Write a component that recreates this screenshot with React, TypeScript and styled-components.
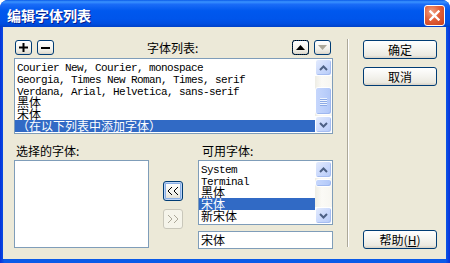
import React from "react";
import styled, { createGlobalStyle } from "styled-components";

const GlobalStyle = createGlobalStyle`
    html, body {
        margin: 0;
        padding: 0;
        background: #ffffff;
    }
    body {
        width: 450px;
        height: 263px;
        overflow: hidden;
        font-family: "Noto Sans CJK SC", sans-serif;
        font-size: 12px;
        color: #000000;
    }
`;

const Window = styled.div`
    width: 450px;
    height: 263px;
    display: flex;
    flex-direction: column;
    background: #0a45dc;
    border-radius: 8px 8px 0 0;
    overflow: hidden;
`;

const TitleBar = styled.div`
    height: 28px;
    box-sizing: border-box;
    padding: 3px 5px 0 7px;
    display: flex;
    align-items: center;
    background: linear-gradient(
        180deg,
        #0a5ae8 0%,
        #3a93ff 7%,
        #1a6cf7 16%,
        #0058ee 40%,
        #0055eb 70%,
        #004ee0 88%,
        #0041c8 100%
    );
`;

const Title = styled.span`
    color: #ffffff;
    font-weight: bold;
    font-size: 14px;
    letter-spacing: 0;
    text-shadow: 1px 1px 0 #0a1e8a;
`;

const CloseButton = styled.div`
    margin-left: auto;
    width: 21px;
    height: 21px;
    box-sizing: border-box;
    border: 1px solid #ffffff;
    border-radius: 3px;
    background: radial-gradient(
        circle at 35% 30%,
        #f1a283 0%,
        #e2603a 45%,
        #c8401c 100%
    );
    display: flex;
    align-items: center;
    justify-content: center;
`;

const Frame = styled.div`
    flex: 1;
    display: flex;
    padding: 0 4px 4px 3px;
    background: linear-gradient(90deg, #0831d9 0%, #0a5ae8 1%, #0a5ae8 99%, #0831d9 100%);
`;

const Body = styled.div`
    flex: 1;
    display: flex;
    box-sizing: border-box;
    padding: 13px 9px 10px 11px;
    background: #ece9d8;
`;

const LeftPane = styled.div`
    width: 319px;
    display: flex;
    flex-direction: column;
`;

const TopRow = styled.div`
    height: 15px;
    display: flex;
    align-items: center;
    padding: 0 2px 0 1px;
`;

const ToolButton = styled.div<{ $focused?: boolean }>`
    width: 17px;
    height: 15px;
    box-sizing: border-box;
    border: 1px solid #003c74;
    border-radius: 3px;
    background: linear-gradient(180deg, #ffffff 0%, #f3f2ec 60%, #e3e0d5 90%, #d6d0c5 100%);
    display: flex;
    align-items: center;
    justify-content: center;
    margin-right: 5px;
    outline: ${(p) => (p.$focused ? "1px dotted #000000" : "none")};
    outline-offset: -1px;
    &:last-child {
        margin-right: 0;
    }
`;

const ListLabel = styled.span`
    margin-left: 88px;
    line-height: 15px;
`;

const ArrowGroup = styled.div`
    margin-left: auto;
    display: flex;
`;

const ListBox = styled.div<{ $height: number }>`
    height: ${(p) => p.$height}px;
    box-sizing: border-box;
    border: 1px solid #7f9db9;
    background: #ffffff;
    display: flex;
`;

const Items = styled.div`
    flex: 1;
    padding: 1px 0 1px 0;
    overflow: hidden;
`;

const Item = styled.div<{ $selected?: boolean }>`
    height: 12px;
    line-height: 12px;
    padding-left: 2px;
    white-space: nowrap;
    background: ${(p) => (p.$selected ? "#316ac5" : "transparent")};
    color: ${(p) => (p.$selected ? "#ffffff" : "#000000")};
`;

const Mono = styled.span`
    font-family: "Liberation Mono", "Noto Sans CJK SC", monospace;
    font-size: 11px;
    letter-spacing: -0.6px;
`;

const ScrollBar = styled.div`
    width: 17px;
    display: flex;
    flex-direction: column;
`;

const ScrollArrow = styled.div`
    width: 17px;
    height: 17px;
    box-sizing: border-box;
    border: 1px solid #ffffff;
    border-radius: 3px;
    background: linear-gradient(135deg, #e3ebfd 0%, #c9d8fc 55%, #b6cbf7 100%);
    box-shadow: inset -1px -1px 0 #a6bdf1;
    display: flex;
    align-items: center;
    justify-content: center;
`;

const Track = styled.div<{ $offset: number }>`
    flex: 1;
    padding-top: ${(p) => p.$offset}px;
    background: linear-gradient(90deg, #eeede5 0%, #fbfaf6 40%, #f7f6f1 100%);
`;

const Thumb = styled.div<{ $size: number }>`
    height: ${(p) => p.$size}px;
    box-sizing: border-box;
    border: 1px solid #ffffff;
    border-radius: 3px;
    background: linear-gradient(90deg, #c6d6fc 0%, #bcd0fb 50%, #b1c7f8 100%);
    box-shadow: inset -1px -1px 0 #9fb8ef;
    display: flex;
    flex-direction: column;
    align-items: center;
    justify-content: center;
    gap: 1px;
`;

const Grip = styled.div`
    width: 7px;
    height: 1px;
    background: #eef4fe;
    box-shadow: 0 1px 0 #8caae6;
`;

const LowerSection = styled.div`
    margin-top: 10px;
    display: flex;
`;

const FontColumn = styled.div`
    width: 135px;
    display: flex;
    flex-direction: column;
`;

const ColumnLabel = styled.div<{ $indent: number }>`
    height: 14px;
    line-height: 14px;
    padding-left: ${(p) => p.$indent}px;
    margin-bottom: 2px;
`;

const MoveColumn = styled.div`
    width: 20px;
    margin: 0 15px 0 14px;
    padding-top: 37px;
    display: flex;
    flex-direction: column;
    gap: 8px;
`;

const MoveButton = styled.div<{ $disabled?: boolean }>`
    width: 20px;
    height: 20px;
    box-sizing: border-box;
    border: 1px solid ${(p) => (p.$disabled ? "#c9c7ba" : "#003c74")};
    border-radius: 3px;
    background: ${(p) =>
        p.$disabled
            ? "#f5f4ea"
            : "linear-gradient(180deg, #ffffff 0%, #f3f2ec 60%, #e3e0d5 90%, #d6d0c5 100%)"};
    box-shadow: ${(p) =>
        p.$disabled ? "none" : "inset 0 0 0 1px #bcd4f6, inset 0 0 0 2px #89ade4"};
    display: flex;
    align-items: center;
    justify-content: center;
`;

const TextInput = styled.div`
    margin-top: 6px;
    height: 18px;
    box-sizing: border-box;
    border: 1px solid #7f9db9;
    background: #ffffff;
    line-height: 16px;
    padding-left: 2px;
`;

const Separator = styled.div`
    width: 1px;
    margin: -1px 14px 2px 14px;
    background: #aca899;
    border-right: 1px solid #ffffff;
`;

const RightPane = styled.div`
    width: 74px;
    display: flex;
    flex-direction: column;
    gap: 8px;
`;

const DialogButton = styled.div`
    height: 19px;
    box-sizing: border-box;
    border: 1px solid #003c74;
    border-radius: 3px;
    background: linear-gradient(180deg, #ffffff 0%, #f4f3ee 50%, #ebe9e0 85%, #d6d0c5 100%);
    display: flex;
    align-items: center;
    justify-content: center;
    line-height: 17px;
    &:last-child {
        margin-top: auto;
    }
`;

const Chevron = ({ dir }: { dir: "up" | "down" }) => (
    <svg width="9" height="6" viewBox="0 0 9 6">
        <polyline
            points={dir === "up" ? "1,5 4.5,1.5 8,5" : "1,1 4.5,4.5 8,1"}
            fill="none"
            stroke="#4d6185"
            strokeWidth="2"
        />
    </svg>
);

interface ScrollProps {
    offset: number;
    size: number;
}

const Scroll = ({ offset, size }: ScrollProps) => (
    <ScrollBar>
        <ScrollArrow>
            <Chevron dir="up" />
        </ScrollArrow>
        <Track $offset={offset}>
            <Thumb $size={size}>
                {size > 14 && (
                    <>
                        <Grip />
                        <Grip />
                        <Grip />
                        <Grip />
                    </>
                )}
            </Thumb>
        </Track>
        <ScrollArrow>
            <Chevron dir="down" />
        </ScrollArrow>
    </ScrollBar>
);

const fontList = [
    { text: "Courier New, Courier, monospace", mono: true },
    { text: "Georgia, Times New Roman, Times, serif", mono: true },
    { text: "Verdana, Arial, Helvetica, sans-serif", mono: true },
    { text: "黑体", mono: false },
    { text: "宋体", mono: false },
    { text: "（在以下列表中添加字体）", mono: false, selected: true },
];

const availableFonts = [
    { text: "System", mono: true },
    { text: "Terminal", mono: true },
    { text: "黑体", mono: false },
    { text: "宋体", mono: false, selected: true },
    { text: "新宋体", mono: false },
];

const App = () => {
    return (
        <Window>
            <GlobalStyle />
            <TitleBar>
                <Title>编辑字体列表</Title>
                <CloseButton>
                    <svg width="11" height="11" viewBox="0 0 11 11">
                        <path
                            d="M1.5 1.5 L9.5 9.5 M9.5 1.5 L1.5 9.5"
                            stroke="#ffffff"
                            strokeWidth="2.4"
                            strokeLinecap="square"
                        />
                    </svg>
                </CloseButton>
            </TitleBar>
            <Frame>
                <Body>
                    <LeftPane>
                        <TopRow>
                            <ToolButton>
                                <svg width="9" height="9" viewBox="0 0 9 9">
                                    <path d="M3.5 0h2v3.5h3.5v2h-3.5v3.5h-2v-3.5h-3.5v-2h3.5z" fill="#000" />
                                </svg>
                            </ToolButton>
                            <ToolButton>
                                <svg width="9" height="2" viewBox="0 0 9 2">
                                    <rect width="9" height="2" fill="#000" />
                                </svg>
                            </ToolButton>
                            <ListLabel>字体列表:</ListLabel>
                            <ArrowGroup>
                                <ToolButton $focused>
                                    <svg width="9" height="5" viewBox="0 0 9 5">
                                        <polygon points="0,5 4.5,0 9,5" fill="#000" />
                                    </svg>
                                </ToolButton>
                                <ToolButton>
                                    <svg width="9" height="5" viewBox="0 0 9 5">
                                        <polygon points="0,0 9,0 4.5,5" fill="#aca899" />
                                    </svg>
                                </ToolButton>
                            </ArrowGroup>
                        </TopRow>
                        <ListBox $height={76} style={{ marginTop: 3 }}>
                            <Items>
                                {fontList.map((f, i) => (
                                    <Item key={i} $selected={f.selected}>
                                        {f.mono ? <Mono>{f.text}</Mono> : f.text}
                                    </Item>
                                ))}
                            </Items>
                            <Scroll offset={11} size={28} />
                        </ListBox>
                        <LowerSection>
                            <FontColumn>
                                <ColumnLabel $indent={2}>选择的字体:</ColumnLabel>
                                <ListBox $height={88} />
                            </FontColumn>
                            <MoveColumn>
                                <MoveButton>
                                    <svg width="12" height="10" viewBox="0 0 12 10">
                                        <polyline points="5,1 1,5 5,9" fill="none" stroke="#000" strokeWidth="1" />
                                        <polyline points="11,1 7,5 11,9" fill="none" stroke="#000" strokeWidth="1" />
                                    </svg>
                                </MoveButton>
                                <MoveButton $disabled>
                                    <svg width="12" height="10" viewBox="0 0 12 10">
                                        <polyline points="1,1 5,5 1,9" fill="none" stroke="#aca899" strokeWidth="1" />
                                        <polyline points="7,1 11,5 7,9" fill="none" stroke="#aca899" strokeWidth="1" />
                                    </svg>
                                </MoveButton>
                            </MoveColumn>
                            <FontColumn>
                                <ColumnLabel $indent={4}>可用字体:</ColumnLabel>
                                <ListBox $height={65}>
                                    <Items>
                                        {availableFonts.map((f, i) => (
                                            <Item key={i} $selected={f.selected}>
                                                {f.mono ? <Mono>{f.text}</Mono> : f.text}
                                            </Item>
                                        ))}
                                    </Items>
                                    <Scroll offset={1} size={8} />
                                </ListBox>
                                <TextInput>宋体</TextInput>
                            </FontColumn>
                        </LowerSection>
                    </LeftPane>
                    <Separator />
                    <RightPane>
                        <DialogButton>确定</DialogButton>
                        <DialogButton>取消</DialogButton>
                        <DialogButton>
                            帮助(<u>H</u>)
                        </DialogButton>
                    </RightPane>
                </Body>
            </Frame>
        </Window>
    );
};

export default App;
